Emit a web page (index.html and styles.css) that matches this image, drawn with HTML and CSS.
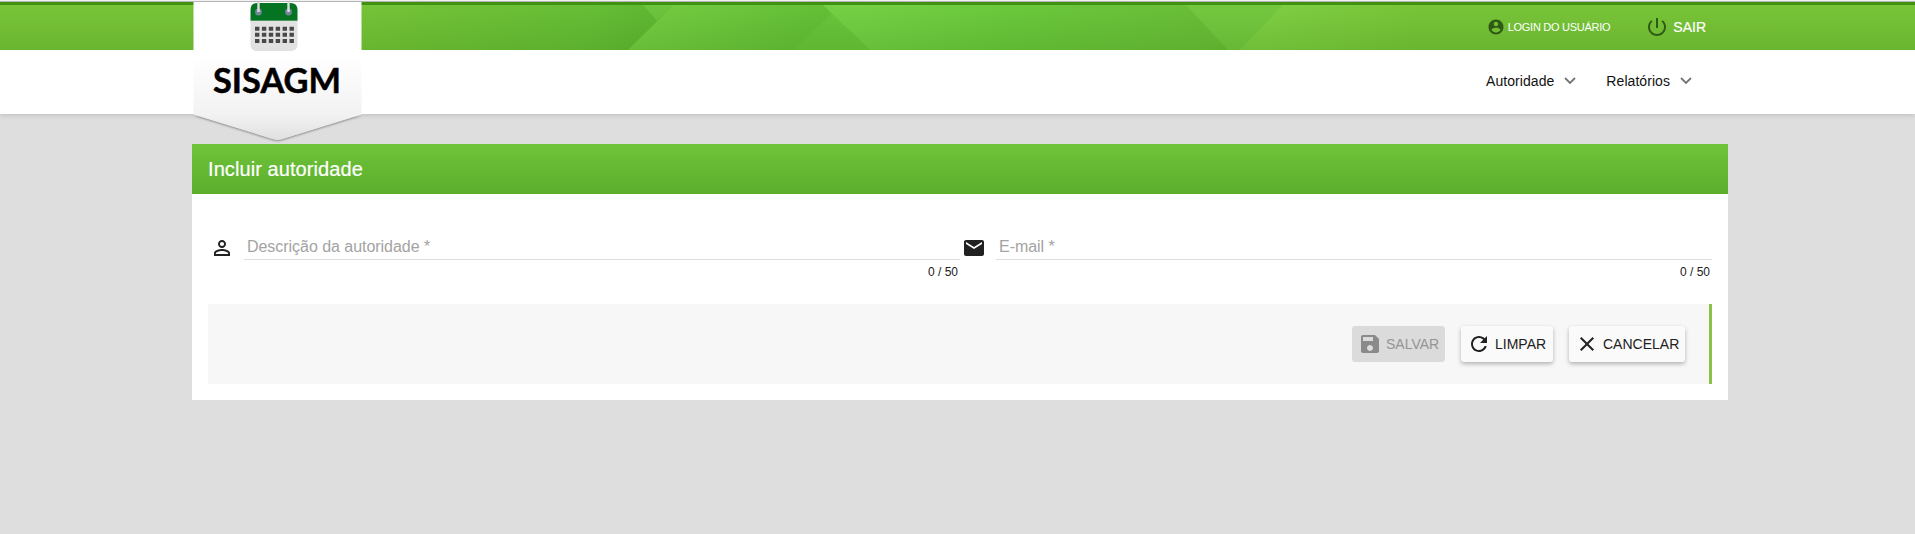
FILE: index.html
```html
<!DOCTYPE html>
<html lang="pt-BR">
<head>
<meta charset="utf-8">
<title>SISAGM</title>
<link rel="stylesheet" href="styles.css">
</head>
<body>
<header class="header">
  <div class="topbar">
    <svg class="topbar-art" viewBox="0 0 1915 45" preserveAspectRatio="none" aria-hidden="true">
      <defs>
        <linearGradient id="a" gradientUnits="userSpaceOnUse" x1="330" y1="0" x2="640" y2="70"><stop offset="0" stop-color="#78c438"/><stop offset=".8" stop-color="#67be36"/><stop offset="1" stop-color="#60b832"/></linearGradient>
        <linearGradient id="b" gradientUnits="userSpaceOnUse" x1="650" y1="0" x2="820" y2="40"><stop offset="0" stop-color="#75cc42"/><stop offset="1" stop-color="#64bf36"/></linearGradient>
        <linearGradient id="c" gradientUnits="userSpaceOnUse" x1="860" y1="0" x2="1230" y2="60"><stop offset="0" stop-color="#75d045"/><stop offset=".4" stop-color="#6bc83c"/><stop offset="1" stop-color="#6abc37"/></linearGradient>
        <linearGradient id="d" gradientUnits="userSpaceOnUse" x1="1270" y1="0" x2="1420" y2="30"><stop offset="0" stop-color="#7fce42"/><stop offset="1" stop-color="#78c438"/></linearGradient>
        <linearGradient id="e" x1="0" y1="0" x2="0" y2="1"><stop offset="0" stop-color="#1e6400" stop-opacity="0"/><stop offset="1" stop-color="#1e6400" stop-opacity=".15"/></linearGradient>
      </defs>
      <rect width="1915" height="45" fill="#78c438"/>
      <path d="M330 0H674L628 45H330Z" fill="url(#a)"/>
      <path d="M643 0H674L657 16Z" fill="#6dc43d"/>
      <path d="M674 0H823L870 45H628Z" fill="url(#b)"/>
      <path d="M793 45L832 8L869 45Z" fill="#6ac53b"/>
      <path d="M823 0H1187L1229 45H870Z" fill="url(#c)"/>
      <path d="M1186 0H1283L1240 45H1228Z" fill="#74c83f"/>
      <path d="M1283 0H1430V45H1240Z" fill="url(#d)"/>
      <rect width="1915" height="45" fill="url(#e)"/>
    </svg>
    <div class="account">
      <a class="login"><svg class="i18" viewBox="0 0 24 24"><path d="M12 2C6.480 2 2 6.480 2 12s4.480 10 10 10 10-4.480 10-10S17.520 2 12 2zm0 3c1.660 0 3 1.340 3 3s-1.340 3-3 3-3-1.340-3-3 1.340-3 3-3zm0 14.200c-2.500 0-4.710-1.280-6-3.220.030-1.990 4-3.080 6-3.080s5.970 1.090 6 3.080c-1.290 1.940-3.500 3.220-6 3.220z"/></svg><span>LOGIN DO USUÁRIO</span></a>
      <a class="logout"><svg class="i24" viewBox="0 0 24 24"><path d="M13 3h-2v10h2V3zm4.830 2.170l-1.420 1.420C17.990 7.860 19 9.810 19 12c0 3.870-3.130 7-7 7s-7-3.130-7-7c0-2.190 1.010-4.140 2.580-5.420L6.170 5.170C4.230 6.820 3 9.260 3 12c0 4.970 4.030 9 9 9s9-4.030 9-9c0-2.740-1.230-5.180-3.170-6.830z"/></svg><span>SAIR</span></a>
    </div>
  </div>
  <nav class="nav">
    <a class="nav-item">Autoridade<svg class="chev" viewBox="0 0 12 8"><path d="M1 1l5 5 5-5"/></svg></a>
    <a class="nav-item">Relatórios<svg class="chev" viewBox="0 0 12 8"><path d="M1 1l5 5 5-5"/></svg></a>
  </nav>
  <svg class="logo" viewBox="0 0 172 142" role="img" aria-label="SISAGM">
    <defs><linearGradient id="paper" x1="0" y1="0" x2="0" y2="1"><stop offset=".4" stop-color="#fff"/><stop offset=".82" stop-color="#f2f2f2"/><stop offset="1" stop-color="#e0e0e0"/></linearGradient></defs>
    <path class="ribbon" d="M1.500 112.500L79 136.500Q85.500 139 92 136.500L169.500 112.500Z" fill="#e0e0e0"/>
    <path d="M1.500 0H169.500V112.500L92 136.500Q85.500 139 79 136.500L1.500 112.500Z" fill="url(#paper)"/>
    <path d="M58.500 18H105.500V42.500Q105.500 49 98.500 49H65.500Q58.500 49 58.500 42.500Z" fill="#e1e1e1"/>
    <path d="M58.500 18V8Q58.500 1 65.500 1H98.500Q105.500 1 105.500 8V18Z" fill="#047423"/>
    <path d="M58.500 18.500H105.500" stroke="#4c9c61"/>
    <circle cx="66.500" cy="10" r="3.400" fill="#71879a"/><circle cx="96.500" cy="10" r="3.400" fill="#71879a"/>
    <path d="M66.500 0V10M96.500 0V10" stroke="#dedede" stroke-width="2.400"/>
    <g stroke="#484848" stroke-width="4" stroke-dasharray="4.400 2.500"><path d="M63 26.700H102"/><path d="M63 32.800H102"/><path d="M63 39H102"/></g>
    <text x="21" y="90.500" textLength="128" lengthAdjust="spacingAndGlyphs">SISAGM</text>
  </svg>
</header>
<main class="card">
  <h1 class="card-title">Incluir autoridade</h1>
  <form class="card-body">
    <div class="fields">
      <div class="field">
        <svg class="i24" viewBox="0 0 24 24"><path d="M12 5.900a2.100 2.100 0 110 4.200 2.100 2.100 0 010-4.200m0 9c2.970 0 6.100 1.460 6.100 2.100v1.100H5.900V17c0-.640 3.130-2.100 6.100-2.100M12 4C9.790 4 8 5.790 8 8s1.790 4 4 4 4-1.790 4-4-1.790-4-4-4zm0 9c-2.670 0-8 1.340-8 4v3h16v-3c0-2.660-5.330-4-8-4z"/></svg>
        <div class="input"><label>Descrição da autoridade *</label><span class="count">0 / 50</span></div>
      </div>
      <div class="field">
        <svg class="i24" viewBox="0 0 24 24"><path d="M20 4H4c-1.100 0-1.990.900-1.990 2L2 18c0 1.100.900 2 2 2h16c1.100 0 2-.900 2-2V6c0-1.100-.900-2-2-2zm0 4l-8 5-8-5V6l8 5 8-5v2z"/></svg>
        <div class="input"><label>E-mail *</label><span class="count">0 / 50</span></div>
      </div>
    </div>
    <div class="actions">
      <button type="button" class="btn save" disabled><svg class="i24" viewBox="0 0 24 24"><path d="M17 3H5c-1.110 0-2 .900-2 2v14c0 1.100.890 2 2 2h14c1.100 0 2-.900 2-2V7l-4-4zm-5 16c-1.660 0-3-1.340-3-3s1.340-3 3-3 3 1.340 3 3-1.340 3-3 3zm3-10H5V5h10v4z"/></svg>SALVAR</button>
      <button type="button" class="btn clear"><svg class="i24" viewBox="0 0 24 24"><path d="M17.650 6.350C16.200 4.900 14.210 4 12 4c-4.420 0-7.990 3.580-7.990 8s3.570 8 7.990 8c3.730 0 6.840-2.550 7.730-6h-2.080c-.820 2.330-3.040 4-5.650 4-3.310 0-6-2.690-6-6s2.690-6 6-6c1.660 0 3.140.690 4.220 1.780L13 11h7V4l-2.350 2.350z"/></svg>LIMPAR</button>
      <button type="button" class="btn cancel"><svg class="i24" viewBox="0 0 24 24"><path d="M19 6.410L17.590 5 12 10.590 6.410 5 5 6.410 10.590 12 5 17.590 6.410 19 12 13.410 17.590 19 19 17.590 13.410 12z"/></svg>CANCELAR</button>
    </div>
  </form>
</main>
</body>
</html>
```
FILE: styles.css
```css
* { box-sizing: border-box; }
body {
  margin: 0;
  min-height: 534px;
  background: #dedede;
  font-family: "Liberation Sans", Arial, sans-serif;
  font-size: 14px;
  color: #212121;
  overflow: hidden;
}
svg { flex: none; display: block; fill: currentColor; }
.i24 { width: 24px; height: 24px; }
.i18 { width: 18px; height: 18px; }

.header {
  position: relative;
  height: 114px;
  background: #fff;
  border-top: 1px solid #f1f1f1;
  box-shadow: 0 1px 5px rgba(0, 0, 0, .15);
}
.topbar {
  position: relative;
  height: 49px;
  border-top: 1px solid #b5b5b5;
  background: #3f910f;
  padding-top: 3px;
}
.topbar-art { position: absolute; left: 0; top: 3px; width: 100%; height: 45px; }
.account {
  position: relative;
  display: flex;
  justify-content: flex-end;
  align-items: center;
  gap: 35px;
  height: 43px;
  padding-right: 209px;
  color: #fff;
}
.account svg { color: #2f5a16; }
.login, .logout { display: flex; align-items: center; }
.login { gap: 3px; font-size: 11px; letter-spacing: -.27px; }
.logout { gap: 4px; -webkit-text-stroke: .2px #fff; }
.logout svg { -webkit-text-stroke: 0; }
.nav {
  display: flex;
  justify-content: flex-end;
  align-items: center;
  gap: 30px;
  height: 62px;
  padding-right: 223px;
  color: #111;
}
.nav-item { display: flex; align-items: center; gap: 10px; letter-spacing: .06px; }
.chev { width: 12px; height: 8px; fill: none; stroke: #757575; stroke-width: 1.8; }
.logo { position: absolute; left: 192px; top: 1px; width: 172px; height: 142px; }
.ribbon { filter: drop-shadow(0 1px 1px rgba(0, 0, 0, .4)); }
.logo text { font: 700 34px Lato, "Open Sans", sans-serif; fill: #000; stroke: #000; stroke-width: .5px; }

.card { width: 1536px; margin: 30px 0 0 192px; background: #fff; }
.card-title {
  display: flex;
  align-items: center;
  height: 50px;
  margin: 0;
  padding: 0 16px;
  background: linear-gradient(#6fc43a, #5bae2c);
  color: #fff;
  font-size: 20px;
  font-weight: 400;
  letter-spacing: .08px;
  -webkit-text-stroke: .2px #fff;
}
.card-body { padding: 42px 16px 16px; }
.fields { display: grid; grid-template-columns: 1fr 1fr; }
.field { display: flex; gap: 10px; padding-left: 2px; height: 68px; }
.input { flex: 1; display: flex; flex-direction: column; }
.input label {
  height: 24px;
  padding: 0 2px 0 3px;
  border-bottom: 1px solid #dedede;
  color: #a3a3a3;
  font-size: 16px;
  line-height: 21px;
  letter-spacing: -.04px;
}
.count { align-self: flex-end; padding: 5px 2px 0 0; font-size: 12px; line-height: 14px; }
.actions {
  display: flex;
  justify-content: flex-end;
  align-items: center;
  gap: 16px;
  height: 80px;
  padding-right: 24px;
  background: #f7f7f7;
  border-right: 3px solid #8bc34a;
}
.btn {
  display: flex;
  align-items: center;
  gap: 4px;
  height: 36px;
  padding: 0 6px;
  border: 0;
  border-radius: 3px;
  background: #fafafa;
  box-shadow: 0 2px 4px rgba(0, 0, 0, .28);
  color: #212121;
  font: 14px "Liberation Sans", Arial, sans-serif;
}
.save { width: 93px; background: #dbdbdb; box-shadow: none; color: #949494; }
.save svg { color: #8a8a8a; }
.clear { width: 92px; }
.cancel { width: 116px; }
```
